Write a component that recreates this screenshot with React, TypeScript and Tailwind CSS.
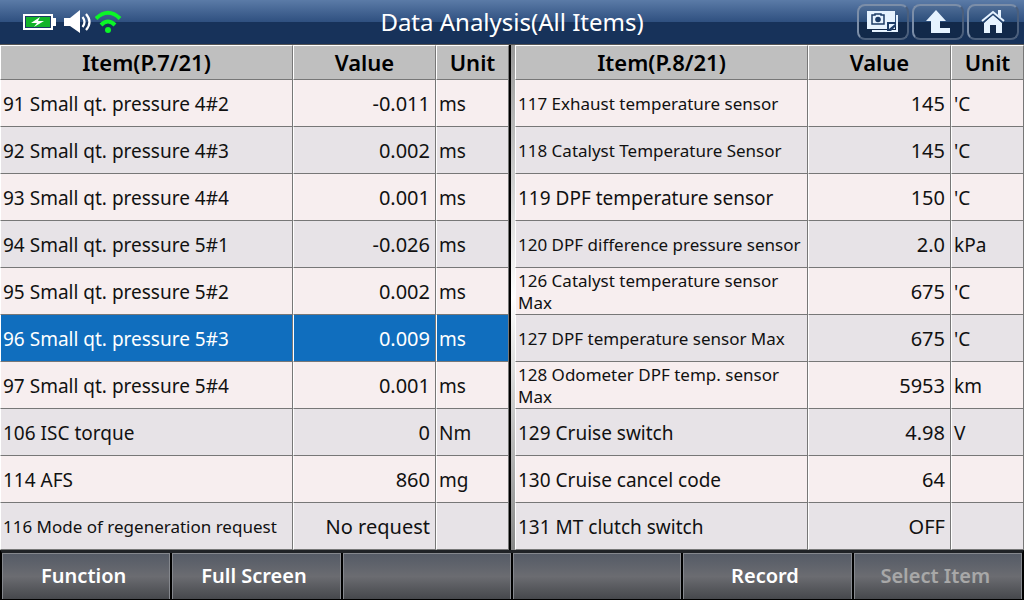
import type { ReactNode } from 'react';
import clsx from 'clsx';

type Row = {
  id: string;
  name: string;
  value: string;
  unit: string;
  small?: boolean;
  selected?: boolean;
};

const leftRows: Row[] = [
  { id: '91', name: 'Small qt. pressure 4#2', value: '-0.011', unit: 'ms' },
  { id: '92', name: 'Small qt. pressure 4#3', value: '0.002', unit: 'ms' },
  { id: '93', name: 'Small qt. pressure 4#4', value: '0.001', unit: 'ms' },
  { id: '94', name: 'Small qt. pressure 5#1', value: '-0.026', unit: 'ms' },
  { id: '95', name: 'Small qt. pressure 5#2', value: '0.002', unit: 'ms' },
  { id: '96', name: 'Small qt. pressure 5#3', value: '0.009', unit: 'ms', selected: true },
  { id: '97', name: 'Small qt. pressure 5#4', value: '0.001', unit: 'ms' },
  { id: '106', name: 'ISC torque', value: '0', unit: 'Nm' },
  { id: '114', name: 'AFS', value: '860', unit: 'mg' },
  { id: '116', name: 'Mode of regeneration request', value: 'No request', unit: '', small: true },
];

const rightRows: Row[] = [
  { id: '117', name: 'Exhaust temperature sensor', value: '145', unit: "'C", small: true },
  { id: '118', name: 'Catalyst Temperature Sensor', value: '145', unit: "'C", small: true },
  { id: '119', name: 'DPF temperature sensor', value: '150', unit: "'C" },
  { id: '120', name: 'DPF difference pressure sensor', value: '2.0', unit: 'kPa', small: true },
  { id: '126', name: 'Catalyst temperature sensor Max', value: '675', unit: "'C", small: true },
  { id: '127', name: 'DPF temperature sensor Max', value: '675', unit: "'C", small: true },
  { id: '128', name: 'Odometer DPF temp. sensor Max', value: '5953', unit: 'km', small: true },
  { id: '129', name: 'Cruise switch', value: '4.98', unit: 'V' },
  { id: '130', name: 'Cruise cancel code', value: '64', unit: '' },
  { id: '131', name: 'MT clutch switch', value: 'OFF', unit: '' },
];

const actions = [
  { label: 'Function' },
  { label: 'Full Screen' },
  { label: '' },
  { label: '' },
  { label: 'Record' },
  { label: 'Select Item', disabled: true },
];

const cellBorder = 'border-r border-b border-l border-r-[#777] border-b-[#777] border-l-white';

const StatusIcons = () => (
  <div className="flex items-center pl-[22px]">
    <svg width="34" height="18" viewBox="0 0 34 18" role="img" aria-label="Battery charging">
      <rect x="2" y="2" width="28" height="14" fill="#1b3a64" stroke="#fff" strokeWidth="2" />
      <rect x="4" y="4" width="24" height="10" fill="#14b42a" />
      <path d="M31 5h3v8h-3z" fill="#fff" />
      <path d="M18 4 9 10h6l-3 4 10-6h-6z" fill="#fff" />
    </svg>
    <svg className="ml-2" width="28" height="24" viewBox="0 0 28 24" role="img" aria-label="Sound on">
      <path d="M0 8h6l10-8v23L6 16H0z" fill="#fff" />
      <path d="M18.500 7q4 5 0 10M22 4q7 8 0 16" fill="none" stroke="#fff" strokeWidth="2.200" />
    </svg>
    <svg className="ml-[3px]" width="27" height="24" viewBox="0 0 27 24" role="img" aria-label="Wi-Fi">
      <path d="M1 8.500Q13-3 25 8.500M6 15q7-7 14 0" fill="none" stroke="#0cf528" strokeWidth="4" />
      <circle cx="13" cy="20" r="3" fill="#0cf528" />
    </svg>
  </div>
);

const ToolButton = ({ label, children }: { label: string; children: ReactNode }) => (
  <button
    type="button"
    aria-label={label}
    className="flex h-9 w-[52px] items-center justify-center rounded-lg border-2 border-[#7c8ea8] border-r-[#4b5f7c] border-b-[#4b5f7c] bg-linear-to-b from-[#4f6d96] from-0% via-[#2b4d7a] via-50% to-[#12294a] to-50%"
  >
    {children}
  </button>
);

const Toolbar = () => (
  <div className="flex justify-end gap-[3px] pr-[5px]">
    <ToolButton label="Screenshots">
      <svg width="32" height="22" viewBox="0 0 32 22">
        <path d="M30 4v16H5" fill="none" stroke="#e6f3ff" strokeWidth="2" />
        <path d="M0 0h28v18H0z" fill="#e6f3ff" />
        <path d="M5 4h3V3h6v1h3v9H5z" fill="none" stroke="#1c3c67" strokeWidth="1.500" />
        <circle cx="11" cy="8.500" r="2.800" fill="#1c3c67" />
        <path d="M20 20v-9h9v4l-5 5z" fill="#1c3c67" />
        <path d="M22 18v-5h6z" fill="#e6f3ff" />
      </svg>
    </ToolButton>
    <ToolButton label="Back">
      <svg width="26" height="24" viewBox="0 0 26 24">
        <path d="M11 0 21 11h-6v7h10v5H6V11H1z" fill="#e6f3ff" />
      </svg>
    </ToolButton>
    <ToolButton label="Home">
      <svg width="24" height="24" viewBox="0 0 24 24">
        <path d="M1 11 12 2l11 9" fill="none" stroke="#e6f3ff" strokeWidth="2" />
        <path d="M17 0h3v8l-3-3z" fill="#e6f3ff" />
        <path d="M3 13l9-8 9 8v10h-6v-8H9v8H3z" fill="#e6f3ff" />
        <path d="M2 13 12 4.500l10 8.500" fill="none" stroke="#1c3c67" />
      </svg>
    </ToolButton>
  </div>
);

const DataTable = ({ page, rows }: { page: string; rows: Row[] }) => (
  <table className="min-w-0 flex-1 table-fixed border-separate border-spacing-0 text-[19px] leading-6 text-[#111]">
    <colgroup>
      <col />
      <col className="w-[143px]" />
      <col className="w-[73px]" />
    </colgroup>
    <thead>
      <tr className="h-[35px] bg-[#bfbfbf] text-[22px] text-black">
        {[`Item(${page})`, 'Value', 'Unit'].map((title) => (
          <th key={title} scope="col" className={clsx('border-t border-t-white px-0 pt-0 pb-[2px] font-semibold', cellBorder)}>
            {title}
          </th>
        ))}
      </tr>
    </thead>
    <tbody>
      {rows.map((row) => (
        <tr
          key={row.id}
          aria-selected={row.selected}
          className={clsx(
            'h-[47px]',
            row.selected ? 'bg-[#106ebe] text-white' : 'odd:bg-[#f7eeef] even:bg-[#e7e3e7]'
          )}
        >
          <td className={clsx('pt-[2px] pr-0 pb-0 pl-[2px]', cellBorder, row.small && 'text-[17px] leading-[22px]')}>
            {row.id} {row.name}
          </td>
          <td className={clsx('pt-[2px] pr-[5px] pb-0 text-right text-xl leading-6', cellBorder)}>{row.value}</td>
          <td className={clsx('pt-[2px] pb-0 pl-[2px]', cellBorder)}>{row.unit}</td>
        </tr>
      ))}
    </tbody>
  </table>
);

const App = () => {
  return (
    <div className="flex min-h-screen flex-col bg-black font-['Noto_Sans',sans-serif]">
      <header className="grid h-[45px] grid-cols-[1fr_auto_1fr] items-center border-b border-[#555] bg-linear-to-b from-[#5b7ba7] from-0% via-[#2f5080] via-50% to-[#17325a] to-50%">
        <StatusIcons />
        <h1 className="text-2xl text-white">Data Analysis(All Items)</h1>
        <Toolbar />
      </header>

      <main className="flex">
        <DataTable page="P.7/21" rows={leftRows} />
        <div className="w-[6px] border-l-2 border-black bg-linear-to-b from-[#999] via-white to-[#888]" />
        <DataTable page="P.8/21" rows={rightRows} />
      </main>

      <footer className="grid flex-1 grid-cols-6 gap-[2px] border-t-[3px] border-r-2 border-b border-l-2 border-black border-t-[#1f2226]">
        {actions.map((action, i) => (
          <button
            key={i}
            type="button"
            disabled={action.disabled}
            aria-label={action.label || 'Unassigned'}
            className="min-h-[46px] border-x border-t border-[#85888e] bg-linear-to-b from-[#555b66] via-[#6b6c71] to-[#46484c] pr-[5px] pb-[2px] text-xl font-semibold text-white disabled:text-[#a8a8a8]"
          >
            {action.label}
          </button>
        ))}
      </footer>
    </div>
  );
};

export default App;
